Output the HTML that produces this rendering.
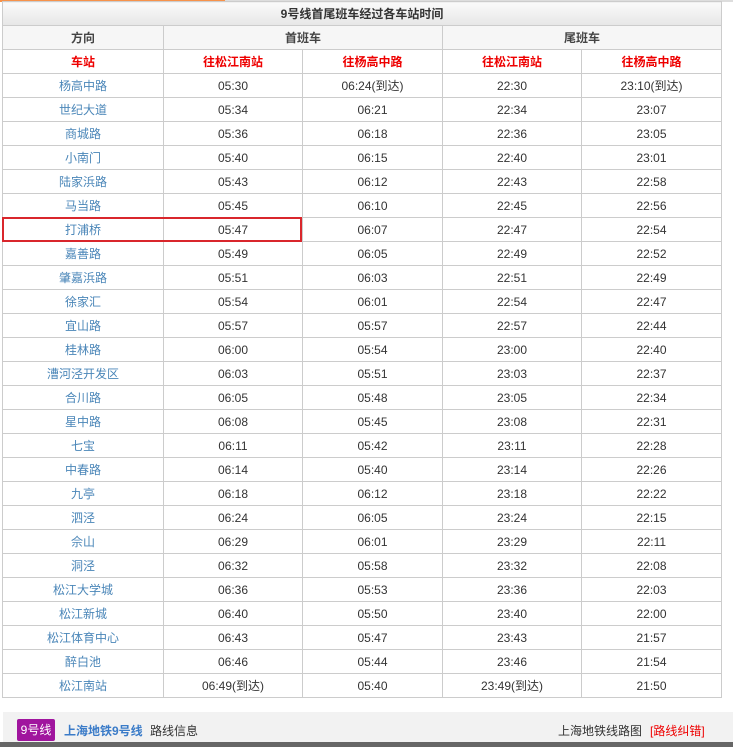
<!DOCTYPE html>
<html><head><meta charset="utf-8"><style>
*{margin:0;padding:0;box-sizing:border-box}
body{width:733px;height:747px;background:#fff;position:relative;overflow:hidden;font-family:"Liberation Sans","Noto Sans CJK SC",sans-serif;font-size:12px;color:#333}
.topline{position:absolute;left:0;top:0;width:733px;height:2px;background:#ddd}
.orange{position:absolute;left:0;top:0;width:225px;height:2px;background:#f7924a}
table{position:absolute;left:2px;top:1px;border-collapse:collapse;table-layout:fixed;width:719px}
td{border:1px solid #ccc;height:24px;text-align:center;vertical-align:middle;font-size:12px;color:#333;padding:0}
.title td{background:linear-gradient(#fafafa,#e6e6e6);font-weight:bold;height:24px}
.hd td{background:#f6f6f6;font-weight:bold;color:#444}
.sub td{font-weight:bold;color:#e00}
td.st{color:#4a86b8}
.hl{position:absolute;left:2px;top:217px;width:300px;height:25px;border:2px solid #d9262c}
.foot{position:absolute;left:3px;top:712px;width:730px;height:31px;background:#f2f2f2}
.dark{position:absolute;left:0;top:742px;width:733px;height:5px;background:#666}
.badge{position:absolute;left:14px;top:7px;width:38px;height:22px;background:#a0159e;color:#fff;border-radius:2px;font-size:12px;line-height:22px;text-align:center}
.f1{position:absolute;left:61px;top:10px;color:#3a7bc8;font-weight:bold;font-size:12px}
.f2{position:absolute;left:147px;top:10px;font-size:12px;color:#333}
.f3{position:absolute;left:555px;top:10px;font-size:12px;color:#333}
.f4{position:absolute;left:647px;top:10px;font-size:12px;color:#e00}
</style></head><body>
<div class="topline"></div><div class="orange"></div>
<table>
<colgroup><col style="width:161px"><col style="width:139px"><col style="width:140px"><col style="width:139px"><col style="width:140px"></colgroup>
<tr class="title"><td colspan="5">9号线首尾班车经过各车站时间</td></tr>
<tr class="hd"><td>方向</td><td colspan="2">首班车</td><td colspan="2">尾班车</td></tr>
<tr class="sub"><td>车站</td><td>往松江南站</td><td>往杨高中路</td><td>往松江南站</td><td>往杨高中路</td></tr>
<tr><td class="st">杨高中路</td><td>05:30</td><td>06:24(到达)</td><td>22:30</td><td>23:10(到达)</td></tr>
<tr><td class="st">世纪大道</td><td>05:34</td><td>06:21</td><td>22:34</td><td>23:07</td></tr>
<tr><td class="st">商城路</td><td>05:36</td><td>06:18</td><td>22:36</td><td>23:05</td></tr>
<tr><td class="st">小南门</td><td>05:40</td><td>06:15</td><td>22:40</td><td>23:01</td></tr>
<tr><td class="st">陆家浜路</td><td>05:43</td><td>06:12</td><td>22:43</td><td>22:58</td></tr>
<tr><td class="st">马当路</td><td>05:45</td><td>06:10</td><td>22:45</td><td>22:56</td></tr>
<tr><td class="st">打浦桥</td><td>05:47</td><td>06:07</td><td>22:47</td><td>22:54</td></tr>
<tr><td class="st">嘉善路</td><td>05:49</td><td>06:05</td><td>22:49</td><td>22:52</td></tr>
<tr><td class="st">肇嘉浜路</td><td>05:51</td><td>06:03</td><td>22:51</td><td>22:49</td></tr>
<tr><td class="st">徐家汇</td><td>05:54</td><td>06:01</td><td>22:54</td><td>22:47</td></tr>
<tr><td class="st">宜山路</td><td>05:57</td><td>05:57</td><td>22:57</td><td>22:44</td></tr>
<tr><td class="st">桂林路</td><td>06:00</td><td>05:54</td><td>23:00</td><td>22:40</td></tr>
<tr><td class="st">漕河泾开发区</td><td>06:03</td><td>05:51</td><td>23:03</td><td>22:37</td></tr>
<tr><td class="st">合川路</td><td>06:05</td><td>05:48</td><td>23:05</td><td>22:34</td></tr>
<tr><td class="st">星中路</td><td>06:08</td><td>05:45</td><td>23:08</td><td>22:31</td></tr>
<tr><td class="st">七宝</td><td>06:11</td><td>05:42</td><td>23:11</td><td>22:28</td></tr>
<tr><td class="st">中春路</td><td>06:14</td><td>05:40</td><td>23:14</td><td>22:26</td></tr>
<tr><td class="st">九亭</td><td>06:18</td><td>06:12</td><td>23:18</td><td>22:22</td></tr>
<tr><td class="st">泗泾</td><td>06:24</td><td>06:05</td><td>23:24</td><td>22:15</td></tr>
<tr><td class="st">佘山</td><td>06:29</td><td>06:01</td><td>23:29</td><td>22:11</td></tr>
<tr><td class="st">洞泾</td><td>06:32</td><td>05:58</td><td>23:32</td><td>22:08</td></tr>
<tr><td class="st">松江大学城</td><td>06:36</td><td>05:53</td><td>23:36</td><td>22:03</td></tr>
<tr><td class="st">松江新城</td><td>06:40</td><td>05:50</td><td>23:40</td><td>22:00</td></tr>
<tr><td class="st">松江体育中心</td><td>06:43</td><td>05:47</td><td>23:43</td><td>21:57</td></tr>
<tr><td class="st">醉白池</td><td>06:46</td><td>05:44</td><td>23:46</td><td>21:54</td></tr>
<tr><td class="st">松江南站</td><td>06:49(到达)</td><td>05:40</td><td>23:49(到达)</td><td>21:50</td></tr>
</table>
<div class="hl"></div>
<div class="foot">
<div class="badge">9号线</div>
<div class="f1">上海地铁9号线</div>
<div class="f2">路线信息</div>
<div class="f3">上海地铁线路图</div>
<div class="f4">[路线纠错]</div>
</div>
<div class="dark"></div>
</body></html>
